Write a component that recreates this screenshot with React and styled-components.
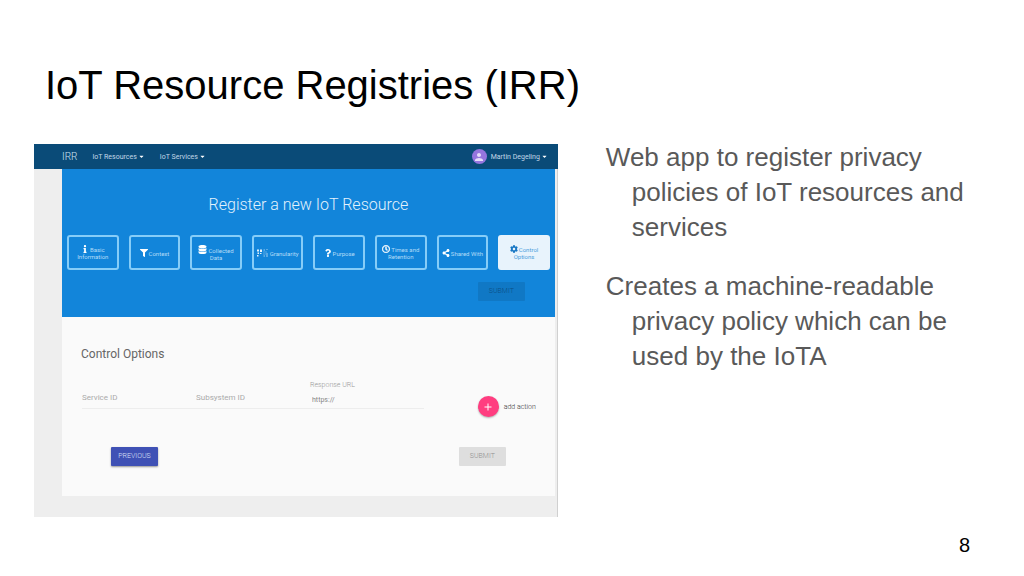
import React, { useState } from 'react';
import styled, { createGlobalStyle } from 'styled-components';
import { FaInfo, FaFilter, FaDatabase, FaQuestion, FaRegClock, FaShareAlt, FaCog, FaCaretDown } from 'react-icons/fa';
import { MdPerson, MdAdd } from 'react-icons/md';

const GlobalStyle = createGlobalStyle`
  * {
    box-sizing: border-box;
  }

  body {
    margin: 0;
    background: #fff;
    font-family: 'Liberation Sans', Arial, sans-serif;
  }
`;

const Slide = styled.main`
  display: flex;
  flex-direction: column;
  min-height: 100vh;
  padding: 62px 34px 19px;
`;

const SlideTitle = styled.h1`
  margin: 0 0 36px;
  padding-left: 11px;
  font-size: 40px;
  line-height: 46px;
  font-weight: 400;
  color: #000;
`;

const Columns = styled.div`
  display: grid;
  grid-template-columns: 15fr 11fr;
  gap: 48px;
  align-items: start;
`;

const Points = styled.div`
  display: flex;
  flex-direction: column;
  gap: 24px;
  margin-top: -4px;
`;

const Point = styled.p`
  margin: 0;
  padding-left: 26px;
  text-indent: -26px;
  font-size: 26px;
  line-height: 35px;
  color: #595959;
`;

const PageNumber = styled.footer`
  margin-top: auto;
  padding-right: 20px;
  text-align: right;
  font-size: 20px;
  line-height: 24px;
  color: #000;
`;

const AppWindow = styled.section`
  min-width: 0;
  background: #eee;
  font-family: Roboto, sans-serif;
  font-weight: 300;
`;

const NavBar = styled.nav`
  display: flex;
  align-items: center;
  gap: 15px;
  height: 25px;
  padding: 0 10px 0 28px;
  background: #0a4b78;
`;

const Brand = styled.a`
  font-size: 10px;
  line-height: 12px;
  color: #cfe3f2;
  text-decoration: none;
`;

const NavButton = styled.button`
  display: flex;
  align-items: center;
  gap: 1px;
  padding: 0;
  border: 0;
  background: none;
  font: inherit;
  font-size: 7px;
  font-weight: 400;
  line-height: 12px;
  color: #c2d8e8;

  svg {
    color: #fff;
  }
`;

const User = styled.div`
  display: flex;
  align-items: center;
  gap: 4px;
  margin-left: auto;
`;

const Avatar = styled.span`
  display: flex;
  align-items: center;
  justify-content: center;
  width: 15px;
  height: 15px;
  border-radius: 50%;
  background: #9575de;
  color: #e6dcfa;
`;

const Page = styled.div`
  padding: 0 2px 21px 28px;
  border-right: 1px solid #d0d0d0;
`;

const Hero = styled.header`
  display: flex;
  flex-direction: column;
  height: 148px;
  padding: 26px 5px 0;
  background: #1285da;
`;

const HeroTitle = styled.h2`
  margin: 0 0 20px;
  font-size: 16px;
  line-height: 20px;
  font-weight: 300;
  text-align: center;
  color: #e3f2fc;
`;

const Steps = styled.div`
  display: grid;
  grid-template-columns: repeat(8, 1fr);
  gap: 10px;
`;

const Step = styled.button`
  height: 35px;
  padding: 0 2px;
  border: 2px solid ${(props) => (props.$active ? '#e8f3fc' : '#86cdf8')};
  border-radius: 3px;
  background: ${(props) => (props.$active ? '#e8f3fc' : 'transparent')};
  color: ${(props) => (props.$active ? '#4b9fdd' : '#b4dcf8')};
  font: inherit;
  font-size: 6px;
  font-weight: 400;
  line-height: 7px;
  white-space: nowrap;

  svg {
    margin-right: 1px;
    color: ${(props) => (props.$active ? '#1877c4' : '#fff')};
    vertical-align: -1px;
  }
`;

const Button = styled.button`
  width: 47px;
  height: 19px;
  padding: 0;
  border: 0;
  border-radius: 1px;
  font: inherit;
  font-size: 7px;
  line-height: 19px;
  background: ${(props) => (props.$primary ? '#3f51b5' : '#dedede')};
  color: ${(props) => (props.$primary ? '#dde0f8' : '#909090')};
  box-shadow: ${(props) => (props.$primary ? '0 1px 2px rgba(0, 0, 0, 0.4)' : 'none')};
`;

const HeroButton = styled(Button)`
  align-self: flex-end;
  margin: 12px 25px 0 0;
  background: #1078c5;
  color: #0b4f85;
`;

const Card = styled.form`
  padding: 28px 19px 30px;
  background: #fafafa;
`;

const CardTitle = styled.h3`
  margin: 0 0 18px;
  font-size: 12px;
  line-height: 18px;
  font-weight: 400;
  color: #666;
`;

const FieldRow = styled.div`
  display: flex;
  align-items: flex-end;
  padding-left: 1px;
`;

const Field = styled.label`
  display: flex;
  flex: 0 1 114px;
  flex-direction: column;
  min-width: 0;
  font-size: 7px;
  line-height: 8px;
  color: #999;
`;

const Input = styled.input`
  width: 100%;
  height: ${(props) => (props.$tall ? '24px' : '20px')};
  padding: ${(props) => (props.$tall ? '1px 1px 0 0' : '3px 0 0 2px')};
  border: 0;
  border-bottom: 1px solid #ededed;
  border-radius: 0;
  background: transparent;
  font: inherit;
  font-size: ${(props) => (props.$tall ? '8px' : '7px')};
  font-weight: 400;
  color: #888;
  outline: none;

  &::placeholder {
    color: #aaa;
    opacity: 1;
  }
`;

const AddAction = styled.button`
  display: flex;
  align-items: center;
  gap: 5px;
  margin: 0 0 -8px auto;
  padding: 0;
  border: 0;
  background: none;
  font: inherit;
  font-size: 7px;
  line-height: 8px;
  color: #333;
`;

const Fab = styled.span`
  display: flex;
  align-items: center;
  justify-content: center;
  width: 21px;
  height: 21px;
  border-radius: 50%;
  background: #ff3d80;
  color: #fff;
  box-shadow: 0 1px 2px rgba(0, 0, 0, 0.3);
`;

const Actions = styled.div`
  display: flex;
  justify-content: space-between;
  margin-top: 38px;
  padding: 0 30px;
`;

const GranularityIcon = () => (
  <svg width="12" height="8" viewBox="0 0 24 16" fill="currentColor" aria-hidden="true">
    <path d="M0 1h4v4H0zM6 1h4v5H6zM1 7h3v3H1zM6 8h3v2H6zM0 12h3v3H0z" opacity="0.9" />
    <path d="M13 1h3v2h-3zM18 1h4v1h-4zM13 5h2v2h-2zM17 5h2v2h-2zM13 9h2v2h-2zM17 9h5v2h-5zM13 13h3v2h-3zM18 13h4v2h-4z" opacity="0.6" />
  </svg>
);

const steps = [
  { icon: <FaInfo size={8} />, lines: ['Basic', 'Information'] },
  { icon: <FaFilter size={8} />, lines: ['Context'] },
  { icon: <FaDatabase size={9} />, lines: ['Collected', 'Data'] },
  { icon: <GranularityIcon />, lines: ['Granularity'] },
  { icon: <FaQuestion size={8} />, lines: ['Purpose'] },
  { icon: <FaRegClock size={8} strokeWidth={30} stroke="currentColor" />, lines: ['Times and', 'Retention'] },
  { icon: <FaShareAlt size={8} />, lines: ['Shared With'] },
  { icon: <FaCog size={8} />, lines: ['Control', 'Options'] },
];

const RegistryApp = () => {
  const [active, setActive] = useState(7);
  const [url, setUrl] = useState('https://');

  return (
    <AppWindow>
      <NavBar>
        <Brand href="#">IRR</Brand>
        <NavButton>IoT Resources <FaCaretDown size={7} /></NavButton>
        <NavButton>IoT Services <FaCaretDown size={7} /></NavButton>
        <User>
          <Avatar><MdPerson size={12} /></Avatar>
          <NavButton>Martin Degeling <FaCaretDown size={7} /></NavButton>
        </User>
      </NavBar>
      <Page>
        <Hero>
          <HeroTitle>Register a new IoT Resource</HeroTitle>
          <Steps>
            {steps.map((step, index) => (
              <Step key={step.lines[0]} $active={index === active} onClick={() => setActive(index)}>
                {step.icon}
                {step.lines[0]}
                {step.lines[1] && <><br />{step.lines[1]}</>}
              </Step>
            ))}
          </Steps>
          <HeroButton disabled>SUBMIT</HeroButton>
        </Hero>
        <Card onSubmit={(e) => e.preventDefault()}>
          <CardTitle>Control Options</CardTitle>
          <FieldRow>
            <Field><Input $tall aria-label="Service ID" placeholder="Service ID" /></Field>
            <Field><Input $tall aria-label="Subsystem ID" placeholder="Subsystem ID" /></Field>
            <Field>
              Response URL
              <Input value={url} onChange={(e) => setUrl(e.target.value)} />
            </Field>
            <AddAction type="button">
              <Fab><MdAdd size={12} /></Fab>
              add action
            </AddAction>
          </FieldRow>
          <Actions>
            <Button type="button" $primary>PREVIOUS</Button>
            <Button disabled>SUBMIT</Button>
          </Actions>
        </Card>
      </Page>
    </AppWindow>
  );
};

const App = () => (
  <>
    <GlobalStyle />
    <Slide>
      <SlideTitle>IoT Resource Registries (IRR)</SlideTitle>
      <Columns>
        <RegistryApp />
        <Points>
          <Point>Web app to register privacy policies of IoT resources and services</Point>
          <Point>Creates a machine-readable privacy policy which can be used by the IoTA</Point>
        </Points>
      </Columns>
      <PageNumber>8</PageNumber>
    </Slide>
  </>
);

export default App;
